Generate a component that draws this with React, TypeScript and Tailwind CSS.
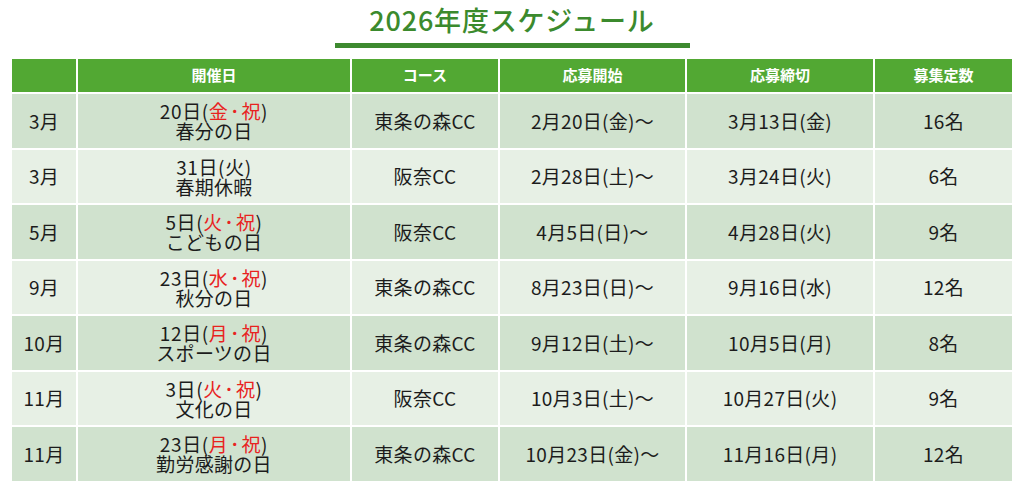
const font = { fontFamily: '"Noto Sans CJK JP", "Noto Sans", sans-serif' };

type Row = {
  month: string;
  day: string;
  holiday?: string[];
  plain?: string;
  name?: string;
  course: string;
  start: string;
  end: string;
  seats: string;
};

const rows: Row[] = [
  { month: "3月", day: "20日", holiday: ["金", "祝"], name: "春分の日", course: "東条の森CC", start: "2月20日(金)～", end: "3月13日(金)", seats: "16名" },
  { month: "3月", day: "31日", plain: "火", name: "春期休暇", course: "阪奈CC", start: "2月28日(土)～", end: "3月24日(火)", seats: "6名" },
  { month: "5月", day: "5日", holiday: ["火", "祝"], name: "こどもの日", course: "阪奈CC", start: "4月5日(日)～", end: "4月28日(火)", seats: "9名" },
  { month: "9月", day: "23日", holiday: ["水", "祝"], name: "秋分の日", course: "東条の森CC", start: "8月23日(日)～", end: "9月16日(水)", seats: "12名" },
  { month: "10月", day: "12日", holiday: ["月", "祝"], name: "スポーツの日", course: "東条の森CC", start: "9月12日(土)～", end: "10月5日(月)", seats: "8名" },
  { month: "11月", day: "3日", holiday: ["火", "祝"], name: "文化の日", course: "阪奈CC", start: "10月3日(土)～", end: "10月27日(火)", seats: "9名" },
  { month: "11月", day: "23日", holiday: ["月", "祝"], name: "勤労感謝の日", course: "東条の森CC", start: "10月23日(金)～", end: "11月16日(月)", seats: "12名" },
];

const heads = ["", "開催日", "コース", "応募開始", "応募締切", "募集定数"];

export default function App() {
  return (
    <div className="w-[1024px] h-[492px] bg-white overflow-hidden" style={font}>
      <div className="flex flex-col items-center pt-[3px]">
        <h1 className="text-[27px] leading-[34px] font-medium text-[#3b8a2d] tracking-[0.8px]">2026年度スケジュール</h1>
        <div className="mt-[6px] w-[355px] h-[5px] bg-[#3d8a2f]" />
      </div>

      <div className="mx-[12px] mt-[11px] grid grid-cols-[64px_272px_146px_185px_186px_137px] gap-x-[2px] gap-y-[2px] text-[#1c1c1c]">
        {heads.map((h, i) => (
          <div key={i} className="h-[33px] bg-[#52a833] flex items-center justify-center text-white text-[15px] font-bold">
            {h}
          </div>
        ))}
        {rows.map((r, i) => {
          const bg = i % 2 === 0 ? "bg-[#d0e2ce]" : "bg-[#e7f0e5]";
          const cell = `${bg} h-[53.5px] flex items-center justify-center text-[19px] tracking-[0.3px]`;
          return [
            <div key={`m${i}`} className={cell}>{r.month}</div>,
            <div key={`d${i}`} className={`${cell} flex-col leading-[20px] pt-[1px]`}>
              <div className="tracking-[0.6px]">
                {r.day}(
                {r.holiday ? (
                  <span className="text-[#e8231f]">
                    {r.holiday[0]}
                    <span className="mx-[1.5px]">･</span>
                    {r.holiday[1]}
                  </span>
                ) : (
                  r.plain
                )}
                )
              </div>
              <div>{r.name}</div>
            </div>,
            <div key={`c${i}`} className={cell}>{r.course}</div>,
            <div key={`s${i}`} className={cell}>{r.start}</div>,
            <div key={`e${i}`} className={cell}>{r.end}</div>,
            <div key={`n${i}`} className={cell}>{r.seats}</div>,
          ];
        })}
      </div>
    </div>
  );
}
